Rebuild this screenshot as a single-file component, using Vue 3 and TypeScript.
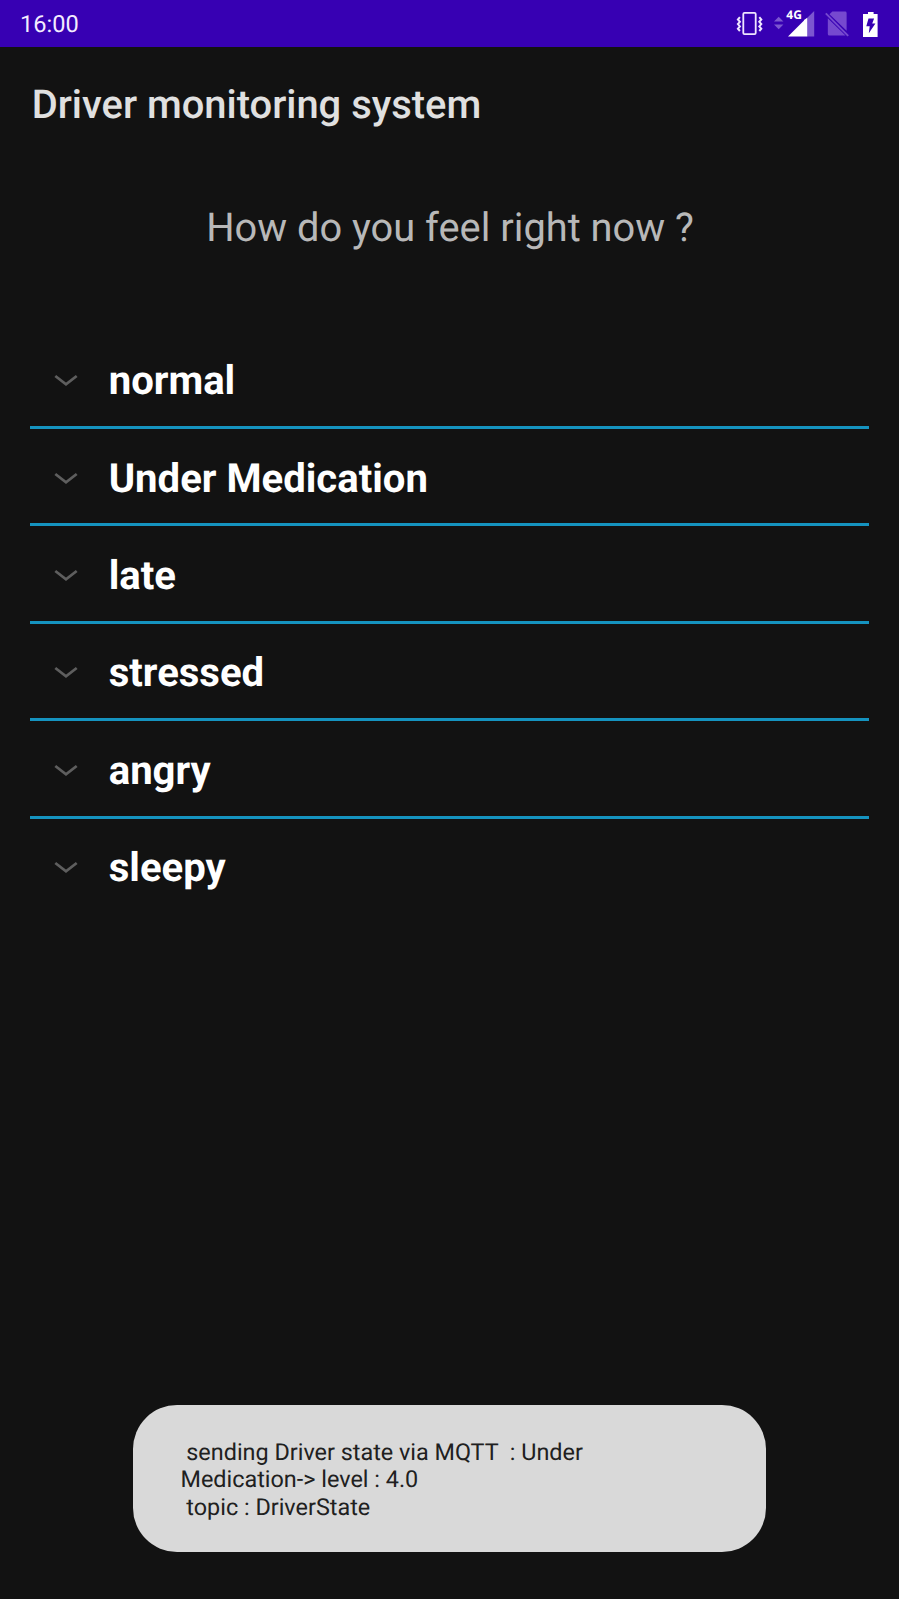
<script setup lang="ts">
const moods: string[] = ['normal', 'Under Medication', 'late', 'stressed', 'angry', 'sleepy']
const toast = ' sending Driver state via MQTT  : Under\nMedication-> level : 4.0\n topic : DriverState'
</script>

<template>
  <div class="screen">
    <header class="status">
      <span class="clock">16:00</span>
      <svg class="icons" width="180" height="47" viewBox="0 0 180 47">
        <g fill="none" stroke="#efe6ff" stroke-width="1.8">
          <rect x="24.3" y="12.8" width="12.4" height="21.4" rx="1.2" />
          <path d="M20.9 17.2l-2 2.3 2 2.3-2 2.3 2 2.3-2 2.3 2 2.3M40.3 17.2l2 2.3-2 2.3 2 2.3-2 2.3 2 2.3-2 2.3" stroke-width="2" />
        </g>
        <path d="M55 21.5l4.7-4.8 4.7 4.8zM55 24.5h9.4l-4.7 4.8z" fill="#7c56d0" />
        <path d="M88.3 17.8L95.2 11v25.5h-6.9z" fill="#7c56d0" />
        <path d="M69 36.5L85 20.5V20l3.3-2.2v18.7z" fill="#fff" />
        <text class="network" x="67.3" y="19.2">4G</text>
        <path d="M108.8 18.2L126.5 35.5h-16.1q-1.6 0-1.6-1.6z" fill="#7649cf" />
        <path d="M110.5 14.2l2.8-2.7h12.9q1.4 0 1.4 1.4v17.8z" fill="#7649cf" />
        <path d="M106.8 13.4l22.4 22.4" fill="none" stroke="#7649cf" stroke-width="1.9" />
        <path d="M149 12h5.6v2h4v23h-14.6V14h5z" fill="#fff" />
        <path d="M149.5 18.5h5.6l-1.9 5h3.2l-6.6 9.8.9-7h-3.4z" fill="#3700b3" />
      </svg>
    </header>
    <h1 class="title">Driver monitoring system</h1>
    <p class="question">How do you feel right now ?</p>
    <ul class="moods">
      <li v-for="mood in moods" :key="mood" class="mood">
        <svg class="chevron" width="26" height="14" viewBox="0 0 26 14">
          <path d="M2.3 2L13 10.3 23.7 2" fill="none" stroke="#5e5e5e" stroke-width="2.8" />
        </svg>
        <span class="label">{{ mood }}</span>
      </li>
    </ul>
    <div class="toast">{{ toast }}</div>
  </div>
</template>

<style>
body {
  margin: 0;
  background: #121212;
}
</style>

<style scoped>
.screen {
  box-sizing: border-box;
  display: flex;
  flex-direction: column;
  width: 899px;
  height: 1599px;
  padding-bottom: 47.5px;
  overflow: hidden;
  background: #121212;
  font-family: Roboto, sans-serif;
  text-rendering: geometricPrecision;
}
.status {
  display: flex;
  justify-content: space-between;
  height: 47px;
  background: #3700b3;
}
.clock {
  padding-left: 20px;
  font-size: 23.6px;
  line-height: 48px;
  color: #f3ecff;
}
.network {
  font: bold 12px "Open Sans", sans-serif;
  fill: #fff;
}
.title {
  margin: 34px 0 0 31.7px;
  font-size: 39.9px;
  line-height: 48px;
  font-weight: 500;
  color: #e0e0e0;
}
.question {
  margin: 75px 0 0;
  padding-left: 1px;
  text-align: center;
  font-size: 39.8px;
  line-height: 48px;
  color: #b8b8b8;
}
.moods {
  margin: 79.4px 30px 0;
  padding: 0;
  list-style: none;
}
.mood {
  box-sizing: border-box;
  display: flex;
  align-items: center;
  height: 97.45px;
  padding: 5px 0 0 23.3px;
  border-bottom: 3px solid #1593bf;
}
.mood:last-child {
  border-color: transparent;
}
.chevron {
  flex: none;
}
.label {
  margin-left: 29.4px;
  font-size: 40.1px;
  line-height: 48px;
  font-weight: 700;
  color: #fff;
}
.toast {
  box-sizing: border-box;
  width: 633px;
  height: 147px;
  margin: auto auto 0;
  padding: 34.3px 47.5px 0;
  border-radius: 44px;
  background: #d9d9d9;
  color: #202020;
  font-size: 23.4px;
  line-height: 27.5px;
  white-space: pre;
}
</style>
